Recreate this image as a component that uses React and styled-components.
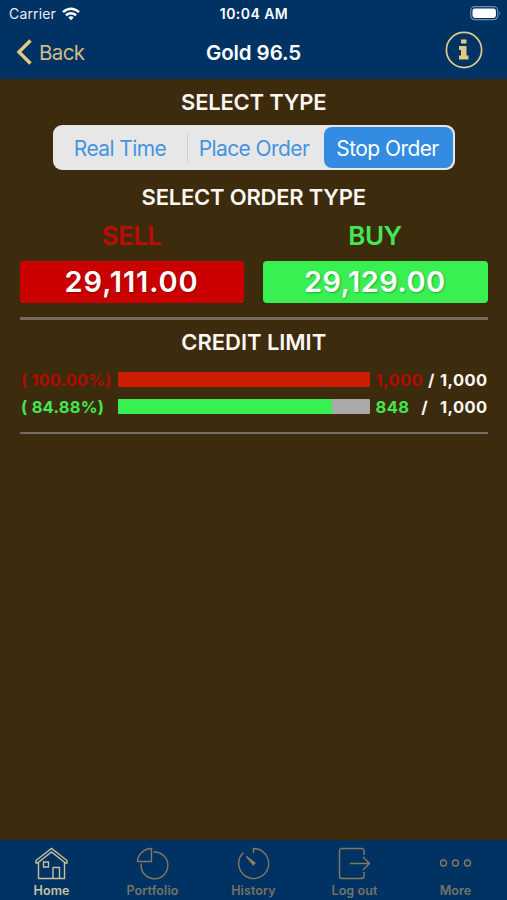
import React, { useState } from 'react';
import styled, { createGlobalStyle } from 'styled-components';

const GlobalStyle = createGlobalStyle`
  * {
    box-sizing: border-box;
  }

  body {
    margin: 0;
    background: #3d2b0e;
    font-family: Inter, "Liberation Sans", sans-serif;
  }

  button {
    border: none;
    padding: 0;
    background: none;
    font-family: inherit;
    cursor: pointer;
  }
`;

const Screen = styled.div`
  display: flex;
  flex-direction: column;
  height: 900px;
  background: #3d2b0e;
  color: #fff;
  white-space: nowrap;
  overflow: hidden;
`;

const Header = styled.header`
  height: 79px;
  background: #003263;
`;

const StatusBar = styled.div`
  display: grid;
  grid-template-columns: 1fr auto 1fr;
  align-items: center;
  height: 27px;
  padding: 0 6px 0 9px;
`;

const Carrier = styled.div`
  display: flex;
  align-items: center;
  gap: 6px;
  font-size: 14px;
  letter-spacing: 0.15px;
  color: #e9eef5;
`;

const Clock = styled.div`
  margin-right: 2px;
  font-size: 14px;
  font-weight: 600;
  letter-spacing: 0.45px;
`;

const BatteryIcon = styled.svg`
  justify-self: end;
`;

const NavBar = styled.div`
  display: grid;
  grid-template-columns: 1fr auto 1fr;
  align-items: center;
  height: 50px;
  padding: 0 16px;
`;

const BackButton = styled.button`
  display: flex;
  align-items: center;
  gap: 7px;
  font-size: 20.5px;
  letter-spacing: -0.6px;
  color: #cfbd85;
`;

const Title = styled.h1`
  margin: 0;
  font-size: 20.5px;
  font-weight: 600;
  letter-spacing: -0.1px;
`;

const InfoButton = styled.button`
  justify-self: end;
  height: 38px;
  margin: -5px 8px 0 0;
`;

const Content = styled.main`
  flex: 1;
  padding: 10px 19.5px 0 20px;
`;

const Heading = styled.h2`
  margin: 0;
  height: 26px;
  line-height: 26px;
  font-size: 22px;
  font-weight: 600;
  letter-spacing: ${({ $spacing }) => $spacing || '-0.22px'};
  text-align: center;
  color: #fbf7f2;
`;

const Segmented = styled.div`
  display: grid;
  grid-template-columns: 132px 137px 129px;
  width: 402px;
  height: 45px;
  margin: 10px auto 14px 33px;
  padding: 2px;
  border-radius: 9px;
  background: #e7e7e7;
`;

const Segment = styled.button`
  padding: 1px 2px 0 0;
  border-radius: 8px;
  font-size: 21px;
  letter-spacing: -0.58px;
  color: ${({ $active }) => ($active ? '#fff' : '#4494e2')};
  background: ${({ $active }) => ($active ? '#338be2' : 'transparent')};
`;

const DividedSegment = styled(Segment)`
  padding-right: 3px;
  background: linear-gradient(#cfcfcf, #cfcfcf) 0 50% / 1px 28px no-repeat;
`;

const PriceGrid = styled.div`
  display: grid;
  grid-template-columns: 1fr 1fr;
  column-gap: 19px;
  padding-bottom: 14.5px;
  border-bottom: 3px solid #736b60;
`;

const PriceLabel = styled.div`
  height: 51px;
  padding-right: 1px;
  line-height: 51px;
  font-size: 26px;
  font-weight: 600;
  letter-spacing: -0.6px;
  text-align: center;
  color: ${({ $color }) => $color};
`;

const PriceButton = styled.button`
  width: 100%;
  height: 41.5px;
  padding-right: 1px;
  border-radius: 4px;
  font-size: 29px;
  font-weight: 600;
  letter-spacing: ${({ $spacing }) => $spacing};
  color: #fff;
  background: ${({ $color }) => $color};
  text-shadow: 1px 1px 2px rgba(0, 0, 0, 0.3);
`;

const Credit = styled.section`
  padding-top: 9px;
  padding-bottom: 12px;
  border-bottom: 2px solid #736e66;
`;

const CreditRows = styled.div`
  padding-top: 11px;
`;

const CreditRow = styled.div`
  display: grid;
  grid-template-columns: 98px 252px 1fr;
  align-items: center;
  height: 27px;
  font-size: 16.5px;
  font-weight: 700;
`;

const Percent = styled.span`
  padding-left: 1px;
  letter-spacing: ${({ $spacing }) => $spacing};
  color: ${({ $color }) => $color};
`;

const Track = styled.div`
  height: 15px;
  border-radius: 1px;
  background: #aaa;
  overflow: hidden;
`;

const Fill = styled.div`
  height: 100%;
  background: ${({ $color }) => $color};
`;

const Amounts = styled.div`
  display: flex;
  justify-content: space-between;
  padding: 0 0 0 5.5px;
  letter-spacing: 0.4px;
  color: #fbf7f2;
`;

const Used = styled.span`
  color: ${({ $color }) => $color};
`;

const TabBar = styled.nav`
  display: grid;
  grid-template-columns: repeat(5, 101px);
  justify-content: center;
  height: 60px;
  background: #003263;
`;

const Tab = styled.button`
  display: flex;
  flex-direction: column;
  align-items: center;
  padding-top: 7px;
  font-size: 12.5px;
  font-weight: 600;
  line-height: 18px;
  letter-spacing: 0.1px;
  color: ${({ $active }) => ($active ? '#c7c5a8' : '#757265')};

  svg {
    fill: none;
    stroke: ${({ $active }) => ($active ? '#c4c19a' : '#85795f')};
    stroke-width: 1.4;
  }
`;

const RED = '#cb0000';
const GREEN = '#38f052';

const TYPES = ['Real Time', 'Place Order', 'Stop Order'];

const CREDITS = [
  { percent: '( 100.00%)', value: 100, used: '1,000', total: '1,000', text: '#b30b02', bar: '#cb1d00', spacing: '0.1px' },
  { percent: '( 84.88%)', value: 84.88, used: '848', total: '1,000', text: '#43e653', bar: GREEN, spacing: '0.25px' },
];

const TABS = [
  {
    name: 'Home',
    icon: (
      <>
        <path d="M1 13.5 L16.5 1.5 L32 13.5 V16 L30.5 16 L16.5 5 L2.5 16 L1 16 Z" />
        <path d="M3.5 15.5 V31.5 H29.5 V15.5 M18 31.5 V20.5 H24.5 V31.5 M8.5 15 H13.5 V20 H8.5 Z" />
      </>
    ),
  },
  {
    name: 'Portfolio',
    icon: (
      <>
        <path d="M15.5 1.5 A14 14 0 0 0 1.5 14.5 H15.5 Z" />
        <path d="M17.5 5 A13.4 13.4 0 1 1 5.2 16.5" />
      </>
    ),
  },
  {
    name: 'History',
    icon: (
      <>
        <path d="M16.5 6 V1.5 A15 15 0 1 1 6.5 5.5" />
        <path d="M9.5 9.5 L18 16 L16.2 17.8 Z" fill="#b59a63" />
      </>
    ),
  },
  {
    name: 'Log out',
    icon: (
      <path d="M26 8 V4 Q26 1.5 23.5 1.5 H4 Q1.5 1.5 1.5 4 V29 Q1.5 31.5 4 31.5 H23.5 Q26 31.5 26 29 V25 M12 16.5 H31.5 M25 10 L31.5 16.5 L25 23" />
    ),
  },
  {
    name: 'More',
    icon: (
      <>
        <circle cx="4.5" cy="16" r="3" />
        <circle cx="16.5" cy="16" r="3" />
        <circle cx="28.5" cy="16" r="3" />
      </>
    ),
  },
];

const WifiIcon = () => (
  <svg width="18" height="14" viewBox="0 0 19 14" fill="none" stroke="#fff" strokeWidth="2.6">
    <path d="M1 5 Q9.5 -2.2 18 5" />
    <path d="M4.1 8.4 Q9.5 4 14.9 8.4" />
    <path d="M6.5 10.5 Q9.5 8.3 12.5 10.5 L9.5 13.6 Z" fill="#fff" stroke="none" />
  </svg>
);

const App = () => {
  const [type, setType] = useState('Stop Order');
  const [tab, setTab] = useState('Home');

  return (
    <>
      <GlobalStyle />
      <Screen>
        <Header>
          <StatusBar>
            <Carrier>
              Carrier
              <WifiIcon />
            </Carrier>
            <Clock>10:04 AM</Clock>
            <BatteryIcon width="31" height="15" viewBox="0 0 31 15">
              <rect x="0.7" y="0.7" width="27" height="13" rx="4" fill="none" stroke="#6d8cab" strokeWidth="1.2" />
              <rect x="2.5" y="2.5" width="23.4" height="9.4" rx="2.3" fill="#fff" />
              <path d="M29 5 Q31 7.2 29 9.5 Z" fill="#6d8cab" />
            </BatteryIcon>
          </StatusBar>
          <NavBar>
            <BackButton>
              <svg width="16" height="26" viewBox="0 0 16 26" fill="none" stroke="#e3ca83" strokeWidth="3.4">
                <path d="M14.5 1.5 L3 13 L14.5 24.5" />
              </svg>
              Back
            </BackButton>
            <Title>Gold 96.5</Title>
            <InfoButton>
              <svg width="38" height="38" viewBox="0 0 38 38">
                <circle cx="19" cy="19" r="17.6" fill="none" stroke="#dcc98e" strokeWidth="1.7" />
                <path
                  d="M16 8.5 H21.5 V12.5 H16 Z M14 15 H21.5 V24.5 H23.5 V28.5 H14 V24.5 H16 V19 H14 Z"
                  fill="#e3ca83"
                />
              </svg>
            </InfoButton>
          </NavBar>
        </Header>

        <Content>
          <Heading>SELECT TYPE</Heading>
          <Segmented>
            {TYPES.map((name) => {
              const Item = name === 'Place Order' && type !== name ? DividedSegment : Segment;
              return (
                <Item key={name} $active={type === name} onClick={() => setType(name)}>
                  {name}
                </Item>
              );
            })}
          </Segmented>
          <Heading>SELECT ORDER TYPE</Heading>
          <PriceGrid>
            <PriceLabel $color="#c00a03">SELL</PriceLabel>
            <PriceLabel $color="#43e653">BUY</PriceLabel>
            <PriceButton $color={RED} $spacing="0.9px">29,111.00</PriceButton>
            <PriceButton $color={GREEN} $spacing="0.5px">29,129.00</PriceButton>
          </PriceGrid>
          <Credit>
            <Heading $spacing="-0.05px">CREDIT LIMIT</Heading>
            <CreditRows>
              {CREDITS.map((row) => (
                <CreditRow key={row.percent}>
                  <Percent $color={row.text} $spacing={row.spacing}>{row.percent}</Percent>
                  <Track>
                    <Fill $color={row.bar} style={{ width: `${row.value}%` }} />
                  </Track>
                  <Amounts>
                    <Used $color={row.text}>{row.used}</Used>
                    <span>/</span>
                    <span>{row.total}</span>
                  </Amounts>
                </CreditRow>
              ))}
            </CreditRows>
          </Credit>
        </Content>

        <TabBar>
          {TABS.map(({ name, icon }) => (
            <Tab key={name} $active={tab === name} onClick={() => setTab(name)}>
              <svg width="33" height="35" viewBox="0 0 33 35">
                {icon}
              </svg>
              {name}
            </Tab>
          ))}
        </TabBar>
      </Screen>
    </>
  );
};

export default App;
